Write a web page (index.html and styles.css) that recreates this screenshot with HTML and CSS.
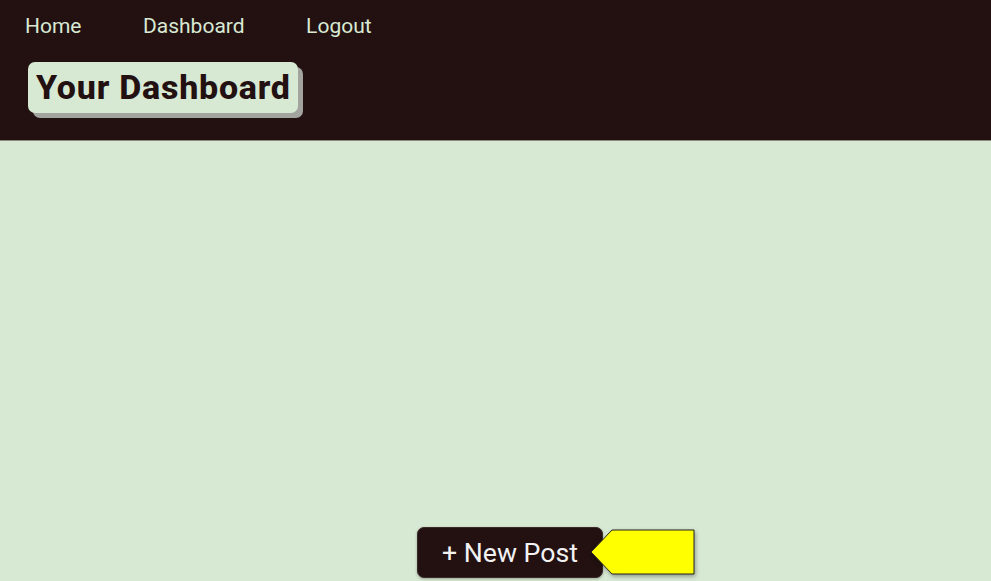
FILE: index.html
```html
<!DOCTYPE html>
<html lang="en">
<head>
<meta charset="utf-8">
<title>Your Dashboard</title>
<link rel="stylesheet" href="styles.css">
</head>
<body>
<header class="site-header">
  <nav class="nav">
    <a class="nav-link" href="#">Home</a>
    <a class="nav-link" href="#">Dashboard</a>
    <a class="nav-link" href="#">Logout</a>
  </nav>
  <h1 class="page-title">Your Dashboard</h1>
</header>
<main class="content">
  <div class="actions">
    <button class="new-post">+ New Post</button>
    <svg class="pointer" width="106" height="48" viewBox="0 0 106 48" aria-hidden="true">
      <polygon points="22,1 104,1 104,45 22,45 1,23" fill="#ffff00" stroke="#222" stroke-width="1"/>
    </svg>
  </div>
</main>
</body>
</html>
```
FILE: styles.css
```css
* { box-sizing: border-box; }
html, body { margin: 0; padding: 0; height: 100%; }
body {
  font-family: Roboto, "Liberation Sans", sans-serif;
  background: #d8e9d3;
  display: flex;
  flex-direction: column;
  overflow: hidden;
}
.site-header {
  background: #231112;
  height: 141px;
  padding: 13px 0 0 25px;
  border-bottom: 1px solid #8a8a80;
  flex: none;
}
.nav {
  display: flex;
  gap: 61.5px;
}
.nav-link {
  color: #d8e9d3;
  text-decoration: none;
  font-size: 21px;
  line-height: 26px;
}
.page-title {
  display: inline-block;
  margin: 23px 0 0 3px;
  background: #d8e9d3;
  color: #231112;
  font-size: 34px;
  font-weight: 800;
  letter-spacing: 0.75px;
  line-height: 51px;
  padding: 0 7px 0 8px;
  border-radius: 7px;
  box-shadow: 5px 5px 0 #a3a3a0;
}
.content {
  flex: 1;
  display: flex;
  align-items: flex-end;
  justify-content: center;
}
.actions {
  display: flex;
  align-items: center;
  margin: 0 0 3px 122px;
}
.new-post {
  background: #231112;
  color: #f2f2f2;
  font-family: Roboto, "Liberation Sans", sans-serif;
  font-size: 26.7px;
  border: 1px solid #3a2a2a;
  border-radius: 7px;
  width: 186px;
  height: 51px;
  padding: 0;
  box-shadow: 0 1px 3px rgba(0,0,0,0.3);
}
.pointer {
  margin-left: -13px;
  filter: drop-shadow(1px 2px 2px rgba(0,0,0,0.35));
}
```
